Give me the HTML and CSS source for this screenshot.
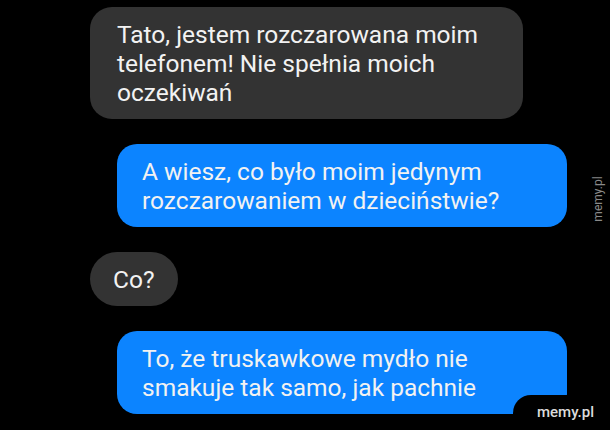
FILE: index.html
```html
<!DOCTYPE html>
<html lang="pl">
<head>
<meta charset="utf-8">
<link rel="stylesheet" href="styles.css">
</head>
<body>
<div class="chat">
  <div class="msg received b1">Tato, jestem rozczarowana moim<br>telefonem! Nie spełnia moich<br>oczekiwań</div>
  <div class="msg sent">A wiesz, co było moim jedynym<br>rozczarowaniem w dzieciństwie?</div>
  <div class="msg received short">Co?</div>
  <div class="msg sent">To, że truskawkowe mydło nie<br>smakuje tak samo, jak pachnie</div>
</div>
<div class="wm-side">memy.pl</div>
<div class="wm-tab">memy.pl</div>
</body>
</html>
```
FILE: styles.css
```css
html, body {
  margin: 0;
  padding: 0;
  background: #000;
  width: 610px;
  height: 430px;
  overflow: hidden;
}
body {
  position: relative;
  font-family: Roboto, "Noto Sans", sans-serif;
}
.chat {
  display: flex;
  flex-direction: column;
  gap: 25px;
  padding-top: 7px;
}
.msg {
  box-sizing: border-box;
  color: #f2f2f2;
  font-size: 24.5px;
  line-height: 29px;
  padding: 12.5px 24px;
  border-radius: 22px;
  white-space: nowrap;
}
.received {
  background: #333333;
  margin-left: 90px;
  align-self: flex-start;
}
.b1 {
  width: 433px;
  padding-left: 27px;
}
.short {
  width: 88px;
  padding-left: 23px;
  border-radius: 27px;
}
.sent {
  background: #0c84ff;
  margin-left: 117px;
  width: 450px;
  padding-left: 25px;
  border-radius: 20px;
}
.wm-side {
  position: absolute;
  left: 566px;
  top: 192px;
  width: 64px;
  text-align: center;
  transform: rotate(-90deg);
  color: #8a8a8a;
  font-size: 12px;
  line-height: 14px;
  font-family: Roboto, sans-serif;
}
.wm-tab {
  position: absolute;
  left: 513px;
  top: 395px;
  right: 0;
  bottom: 0;
  background: #000;
  border-top-left-radius: 18px;
  color: #dcdcdc;
  font-size: 15px;
  font-weight: 500;
  line-height: 35px;
  padding-left: 24px;
  font-family: Roboto, sans-serif;
}
```
